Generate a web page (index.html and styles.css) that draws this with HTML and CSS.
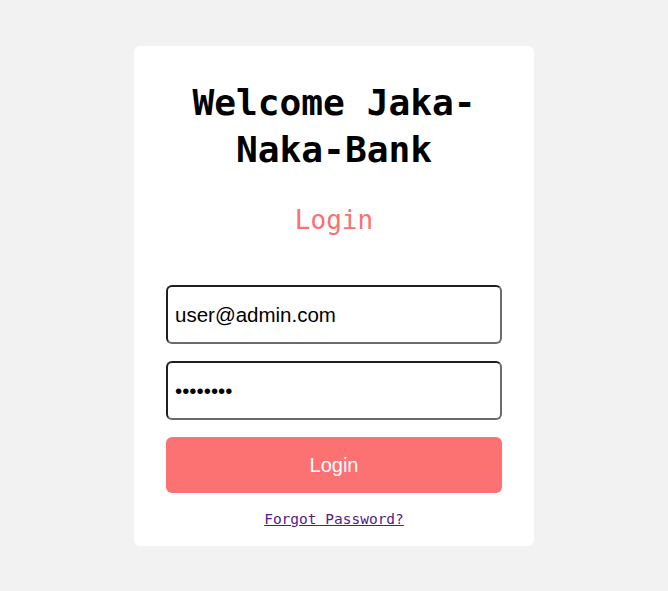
FILE: index.html
```html
<!DOCTYPE html>
<html lang="en">
<head>
<meta charset="utf-8">
<title>Login</title>
<link rel="stylesheet" href="styles.css">
</head>
<body>
<div class="card">
  <h1 class="title">Welcome Jaka-Naka-Bank</h1>
  <h2 class="subtitle">Login</h2>
  <form class="form">
    <input class="field" type="email" value="user@admin.com">
    <input class="field" type="password" value="password">
    <button class="btn" type="button">Login</button>
  </form>
  <a class="forgot" href="#">Forgot Password?</a>
</div>
</body>
</html>
```
FILE: styles.css
```css
html, body {
  margin: 0;
  padding: 0;
}
body {
  background: #f2f2f2;
  min-height: 591px;
  display: flex;
  justify-content: center;
  align-items: flex-start;
}
.card {
  box-sizing: border-box;
  width: 400px;
  height: 500px;
  margin-top: 46px;
  background: #fff;
  border-radius: 6px;
  padding: 33px 32px 0;
  display: flex;
  flex-direction: column;
  align-items: stretch;
}
.title {
  margin: 0;
  font-family: "DejaVu Sans Mono", monospace;
  font-weight: bold;
  font-size: 36.2px;
  line-height: 47px;
  text-align: center;
  color: #000;
}
.subtitle {
  margin: 32px 0 0;
  font-family: "DejaVu Sans Mono", monospace;
  font-weight: normal;
  font-size: 26px;
  line-height: 30px;
  text-align: center;
  color: #fb7070;
}
.form {
  margin-top: 50px;
  display: flex;
  flex-direction: column;
  gap: 17px;
}
.field {
  box-sizing: border-box;
  height: 59px;
  width: 100%;
  margin: 0;
  padding: 0 7px;
  border: 2px solid;
  border-color: #1f1f1f #6b6b6b #6b6b6b #1f1f1f;
  border-radius: 6px;
  font-family: "Liberation Sans", Arial, sans-serif;
  font-size: 20.5px;
  color: #000;
  background: #fff;
  outline: none;
}
.btn {
  height: 56px;
  border: none;
  border-radius: 6px;
  background: #fc7171;
  color: #fff;
  font-family: "Liberation Sans", Arial, sans-serif;
  font-size: 20px;
  cursor: pointer;
}
.forgot {
  margin-top: 18px;
  align-self: center;
  font-family: "DejaVu Sans Mono", monospace;
  font-size: 14.5px;
  color: #551a8b;
}
```
